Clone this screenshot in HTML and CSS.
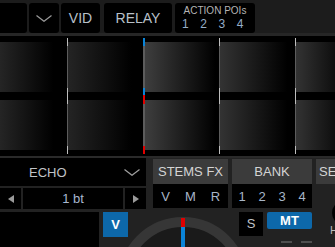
FILE: index.html
```html
<!DOCTYPE html>
<html lang="en">
<head>
    <meta charset="UTF-8">
    <meta name="viewport" content="width=device-width, initial-scale=1.0">
    <title>Deck</title>
    <link rel="stylesheet" href="styles.css">
</head>
<body>

<!-- Barre du haut -->
<div class="topbar">
    <div class="tb-btn tb-blank"></div>
    <div class="tb-btn tb-drop">
        <svg width="16" height="7" viewBox="0 0 16 7"><polyline points="0.5,0.5 8,6.3 15.5,0.5" fill="none" stroke="#9a9a9a" stroke-width="1.2"/></svg>
    </div>
    <div class="tb-btn tb-vid">VID</div>
    <div class="tb-btn tb-relay">RELAY</div>
    <div class="tb-btn tb-pois">
        <span class="pois-title">ACTION POIs</span>
        <span class="pois-nums"><span>1</span><span>2</span><span>3</span><span>4</span></span>
    </div>
</div>
<div class="topstrip"></div>

<!-- Forme d'onde -->
<div class="wave">
    <div class="beat b0"><div class="blk"></div><div class="blk"></div></div>
    <div class="tick"></div>
    <div class="beat b1"><div class="blk"></div><div class="blk"></div></div>
    <div class="tick cue"></div>
    <div class="beat b2"><div class="blk"></div><div class="blk"></div></div>
    <div class="tick"></div>
    <div class="beat b3"><div class="blk"></div><div class="blk"></div></div>
    <div class="tick"></div>
    <div class="beat b4"><div class="blk"></div><div class="blk"></div></div>
</div>
<div class="ruler"></div>

<!-- Effets et pads -->
<div class="upper">
    <div class="fx">
        <div class="fx-select">
            <span>ECHO</span>
            <svg width="16" height="7" viewBox="0 0 16 7"><polyline points="0.5,0.5 8,6.3 15.5,0.5" fill="none" stroke="#a0a0a0" stroke-width="1.2"/></svg>
        </div>
        <div class="fx-step">
            <div class="step-btn"><svg width="6" height="8" viewBox="0 0 6 8"><polygon points="6,0 6,8 0,4" fill="#9a9a9a"/></svg></div>
            <div class="step-val">1 bt</div>
            <div class="step-btn"><svg width="6" height="8" viewBox="0 0 6 8"><polygon points="0,0 0,8 6,4" fill="#9a9a9a"/></svg></div>
        </div>
    </div>
    <div class="pad stems">
        <div class="pad-head">STEMS FX</div>
        <div class="pad-row"><span>V</span><span>M</span><span>R</span></div>
    </div>
    <div class="pad bank">
        <div class="pad-head">BANK</div>
        <div class="pad-row"><span>1</span><span>2</span><span>3</span><span>4</span></div>
    </div>
    <div class="pad side">
        <div class="pad-head">SEND</div>
        <div class="knob"></div>
    </div>
</div>

<!-- Platine -->
<div class="deck">
    <div class="deck-pad"></div>
    <div class="v-btn">V</div>
    <div class="jog">
        <svg width="130" height="130" viewBox="0 0 130 130">
            <circle cx="65" cy="65" r="60" fill="#1a1a1a" stroke="#363636" stroke-width="10"/>
            <rect x="63" y="1" width="4" height="9" fill="#e00000"/>
            <rect x="63" y="10" width="4" height="40" fill="#0a84d8"/>
        </svg>
    </div>
    <div class="s-btn">S</div>
    <div class="mt-col">
        <div class="mt-btn">MT</div>
        <div class="meter"><i></i><i></i></div>
    </div>
    <div class="side-label">HPF</div>
</div>

</body>
</html>
```

FILE: styles.css
```css
/* Style général */
html, body {
    overflow: hidden;
}

body {
    margin: 0;
    width: 335px;
    height: 247px;
    background-color: #1c1c1c;
    font-family: 'Liberation Sans', Arial, sans-serif;
    color: #b8c0c9;
}

/* Barre du haut */
.topbar {
    display: flex;
    gap: 2px;
    height: 30px;
    padding-top: 3px;
    background-color: #1c1c1c;
}

.tb-btn {
    flex-shrink: 0;
    height: 30px;
    background-color: #000;
    border-radius: 3px;
    display: flex;
    align-items: center;
    justify-content: center;
    font-size: 14px;
}

.tb-blank { width: 27px; border-radius: 0 3px 3px 0; }
.tb-drop { width: 30px; }
.tb-vid { width: 39px; }
.tb-relay { width: 68px; margin-left: 2px; }

.tb-pois {
    width: 80px;
    margin-left: 1px;
    flex-direction: column;
    align-items: stretch;
    justify-content: flex-start;
    padding-top: 2px;
    box-sizing: border-box;
}

.pois-title {
    font-size: 10px;
    line-height: 12px;
    text-align: center;
    color: #b4b4b4;
}

.pois-nums {
    display: flex;
    padding-left: 7px;
    font-size: 12px;
    line-height: 14px;
    color: #96aec8;
}

.pois-nums span {
    width: 20px;
}

.topstrip {
    height: 3px;
    background-color: #262626;
}

/* Forme d'onde */
.wave {
    display: flex;
    height: 120px;
    background-color: #000;
}

.beat {
    flex-shrink: 0;
    display: flex;
    flex-direction: column;
    gap: 8px;
    padding-top: 6px;
}

.blk {
    height: 50px;
}

.b0 { width: 67px; }
.b1 { width: 75px; }
.b2 { width: 74px; }
.b3 { width: 75px; }
.b4 { flex: 1; }

.b0 .blk { background: linear-gradient(to right, #252525, #000 80%); }
.b1 .blk { background: linear-gradient(to right, #242424, #000 85%); }
.b2 .blk { background: linear-gradient(to right, #3e3e3e, #000 95%); }
.b3 .blk { background: linear-gradient(to right, #333, #000 90%); }
.b4 .blk { background: linear-gradient(to right, #333, #000 140%); }

.tick {
    flex-shrink: 0;
    width: 1px;
    height: 116px;
    margin-top: 2px;
    background: linear-gradient(to bottom, #bdbdbd 0 8px, #5c5c5c 8px 50px, #bdbdbd 50px 66px, #5c5c5c 66px 108px, #bdbdbd 108px);
}

.tick.cue {
    width: 2px;
    background: linear-gradient(to bottom, #0a84d8 0 8px, #5c5c5c 8px 50px, #0a84d8 50px 57px, #e00000 57px 66px, #5c5c5c 66px 108px, #e00000 108px);
}

.ruler {
    height: 2px;
    background-color: #2a2a2a;
}

/* Effets et pads */
.upper {
    display: flex;
    align-items: flex-start;
    height: 51px;
    background-color: #222;
    font-size: 13px;
}

.upper > div {
    flex-shrink: 0;
}

.fx {
    width: 146px;
    display: flex;
    flex-direction: column;
    gap: 2px;
}

.fx-select {
    height: 28px;
    display: flex;
    align-items: center;
    padding-left: 29px;
    padding-right: 6px;
    background-color: #000;
    color: #c0c4c8;
}

.fx-select svg {
    margin-left: auto;
}

.fx-step {
    display: flex;
    gap: 2px;
    height: 21px;
}

.step-btn {
    width: 21px;
    background-color: #000;
    display: flex;
    align-items: center;
    justify-content: center;
}

.step-val {
    flex: 1;
    background-color: #000;
    text-align: center;
    line-height: 21px;
    color: #a8b8d0;
}

.pad {
    margin-top: 1px;
    margin-left: 4px;
}

.stems { width: 75px; margin-left: 7px; }
.bank { width: 80px; }
.side { width: 60px; }

.pad-head {
    height: 25px;
    line-height: 25px;
    background-color: #3b3b3b;
    text-align: center;
    color: #d4d4d4;
}

.side .pad-head {
    text-align: left;
    padding-left: 3px;
}

.pad-row {
    height: 24px;
    display: flex;
    justify-content: center;
    align-items: center;
    background-color: #000;
    color: #a8b6c8;
}

.side .pad-row {
    background: none;
}

.stems .pad-row span { width: 25px; text-align: center; }
.bank .pad-row span { width: 20px; text-align: center; }

.knob {
    width: 26px;
    height: 26px;
    margin-top: 16px;
    margin-left: 16px;
    border-radius: 50%;
    background-color: #000;
}

/* Platine */
.deck {
    display: flex;
    align-items: flex-start;
    height: 35px;
    padding-top: 3px;
    background-color: #222;
    font-size: 13px;
    overflow: hidden;
}

.deck > div {
    flex-shrink: 0;
}

.deck-pad {
    width: 99px;
    height: 35px;
    background-color: #000;
}

.v-btn {
    width: 25px;
    height: 25px;
    margin-left: 4px;
    background-color: #0d68aa;
    color: #fff;
    font-weight: bold;
    text-align: center;
    line-height: 25px;
}

.jog {
    width: 111px;
    height: 35px;
}

.jog svg {
    display: block;
    margin-left: -10px;
    margin-top: 5px;
}

.s-btn {
    width: 24px;
    height: 24px;
    background-color: #000;
    text-align: center;
    line-height: 24px;
    color: #c0c4c8;
}

.mt-col {
    width: 45px;
    margin-left: 4px;
}

.mt-btn {
    height: 17px;
    background-color: #0d68aa;
    border-radius: 2px;
    color: #fff;
    font-weight: bold;
    text-align: center;
    line-height: 17px;
}

.meter {
    display: flex;
    gap: 9px;
    padding-left: 14px;
    margin-top: 12px;
}

.meter i {
    width: 11px;
    height: 2px;
    background-color: #4e4e4e;
}

.side-label {
    margin-left: 18px;
    margin-top: 12px;
    font-size: 11px;
    color: #bbb;
}
```
